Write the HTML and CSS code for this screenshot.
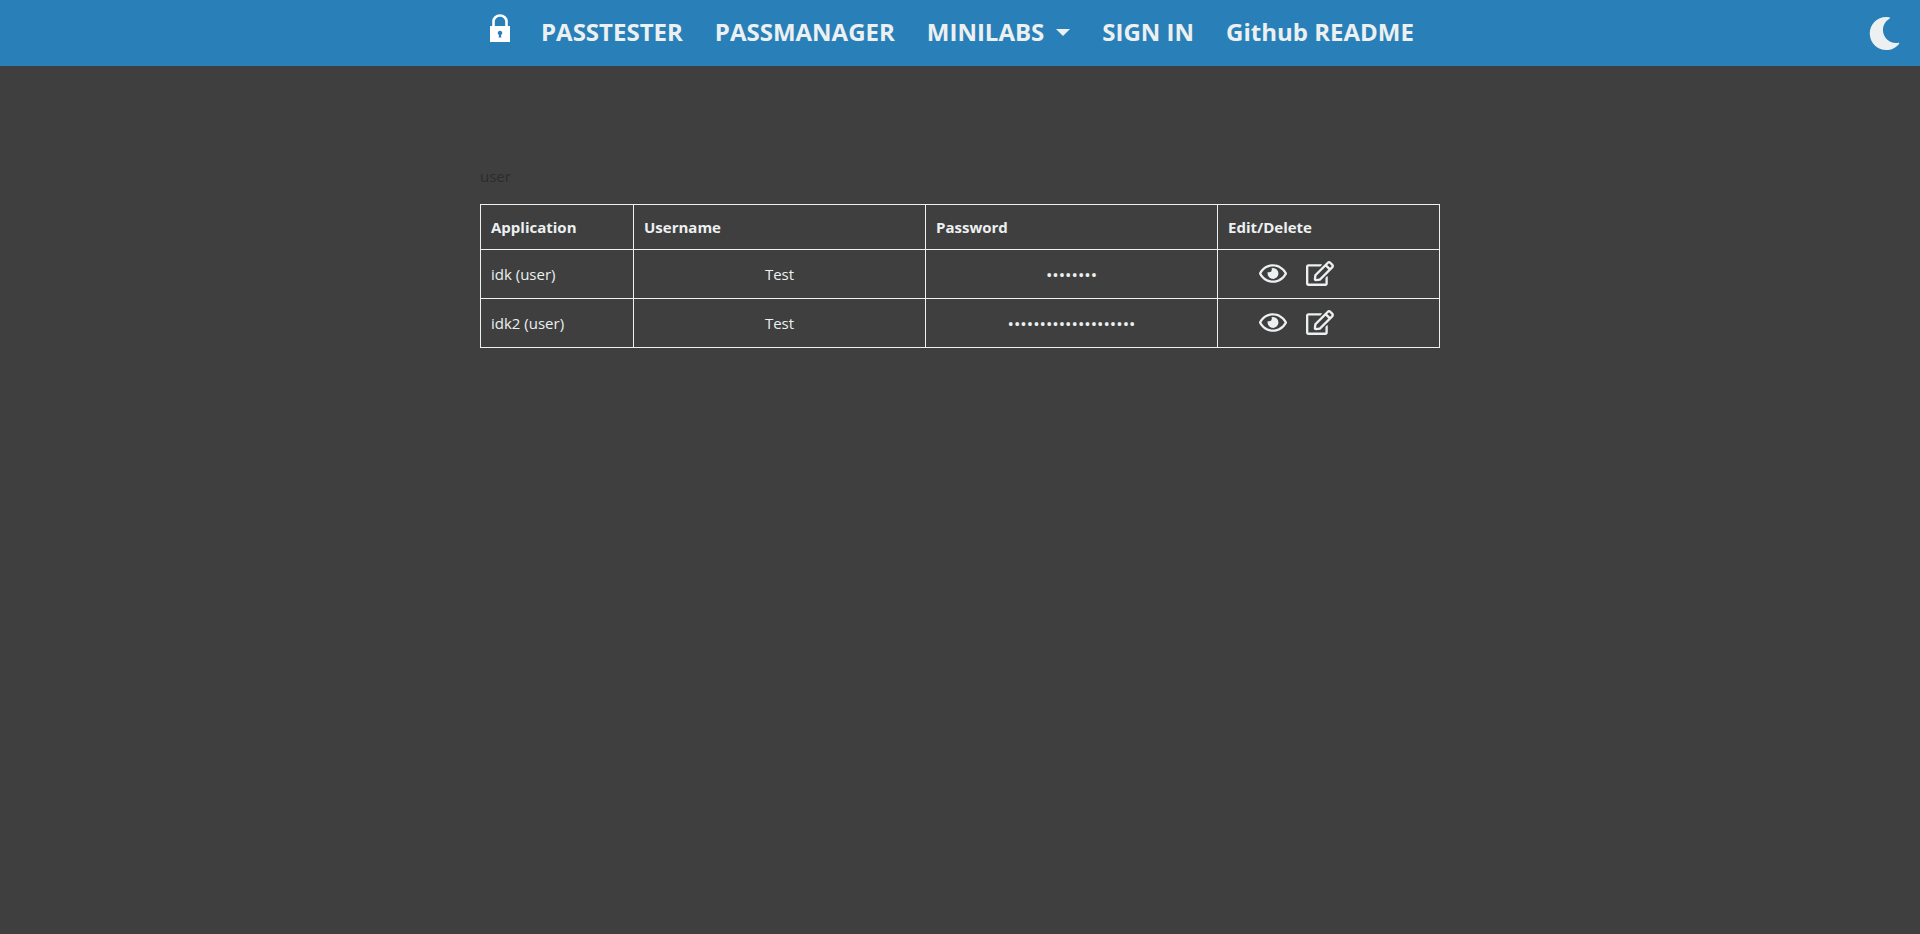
FILE: index.html
```html
<!DOCTYPE html>
<html lang="en">
<head>
    <meta charset="UTF-8">
    <meta name="viewport" content="width=device-width, initial-scale=1.0">
    <title>PassManager</title>
    <link rel="stylesheet" href="styles.css">
</head>
<body>
    <nav class="navbar">
        <div class="nav-inner">
            <a class="nav-logo" href="#">
                <svg class="lock-icon" viewBox="0 0 20 28" fill="#ffffff">
                    <path d="M0 12h20v16H0z M10 16.800a2.200 2.200 0 0 0-1 4.200L8.600 23.500h2.800l-.4-2.500A2.200 2.200 0 0 0 10 16.800z" fill-rule="evenodd"/>
                    <path d="M3.500 13V7.500a6.500 6 0 0 1 13 0V13" fill="none" stroke="#ffffff" stroke-width="2.600"/>
                </svg>
            </a>
            <a class="nav-link" href="#">PASSTESTER</a>
            <a class="nav-link" href="#">PASSMANAGER</a>
            <a class="nav-link dropdown" href="#">MINILABS</a>
            <a class="nav-link" href="#">SIGN IN</a>
            <a class="nav-link" href="#">Github README</a>
        </div>
        <button class="theme-toggle" type="button">
            <svg class="moon-icon" viewBox="0 0 512 512" fill="#ecf0f1">
                <path d="M283.211 512c78.962 0 151.079-35.925 198.857-94.792 7.068-8.708-.639-21.43-11.562-19.35-124.203 23.654-238.262-71.576-238.262-196.954 0-72.222 38.662-138.635 101.498-174.394 9.686-5.512 7.25-20.197-3.756-22.23A258.156 258.156 0 0 0 283.211 0c-141.309 0-256 114.511-256 256 0 141.309 114.511 256 256 256z"/>
            </svg>
        </button>
    </nav>

    <main class="container">
        <p class="current-user">user</p>
        <table class="pass-table">
            <thead>
                <tr>
                    <th class="col-app">Application</th>
                    <th class="col-user">Username</th>
                    <th class="col-pass">Password</th>
                    <th>Edit/Delete</th>
                </tr>
            </thead>
            <tbody>
                <tr>
                    <td>idk (user)</td>
                    <td class="centered">Test</td>
                    <td class="centered dots">••••••••</td>
                    <td>
                        <div class="actions">
                            <svg class="icon" viewBox="0 0 576 512" fill="#ecf0f1"><use href="#eye"/></svg>
                            <svg class="icon" viewBox="0 0 576 512" fill="#ecf0f1"><use href="#edit"/></svg>
                        </div>
                    </td>
                </tr>
                <tr>
                    <td>idk2 (user)</td>
                    <td class="centered">Test</td>
                    <td class="centered dots">••••••••••••••••••••</td>
                    <td>
                        <div class="actions">
                            <svg class="icon" viewBox="0 0 576 512" fill="#ecf0f1"><use href="#eye"/></svg>
                            <svg class="icon" viewBox="0 0 576 512" fill="#ecf0f1"><use href="#edit"/></svg>
                        </div>
                    </td>
                </tr>
            </tbody>
        </table>
    </main>

    <svg class="icon-defs" aria-hidden="true">
        <defs>
            <path id="eye" d="M288 144a110.940 110.940 0 0 0-31.240 5 55.400 55.400 0 0 1 7.240 27 56 56 0 0 1-56 56 55.400 55.400 0 0 1-27-7.240A111.710 111.710 0 1 0 288 144zm284.520 97.400C518.290 135.590 410.930 64 288 64S57.680 135.640 3.480 241.410a32.350 32.350 0 0 0 0 29.190C57.710 376.410 165.070 448 288 448s230.320-71.640 284.520-177.410a32.350 32.350 0 0 0 0-29.190zM288 400c-98.650 0-189.090-55-237.930-144C98.910 167 189.340 112 288 112s189.090 55 237.930 144C477.100 345 386.660 400 288 400z"/>
            <path id="edit" d="M402.300 344.900l32-32c5-5 13.700-1.500 13.700 5.700V464c0 26.500-21.500 48-48 48H48c-26.500 0-48-21.500-48-48V112c0-26.500 21.500-48 48-48h273.500c7.100 0 10.700 8.600 5.700 13.700l-32 32c-1.500 1.500-3.500 2.300-5.700 2.300H48v352h352V350.500c0-2.100.8-4.100 2.300-5.600zm156.600-201.800L296.300 405.700l-90.400 10c-26.200 2.900-48.500-19.200-45.600-45.600l10-90.400L432.900 17.100c22.900-22.900 59.900-22.900 82.700 0l43.200 43.200c22.900 22.900 22.900 60 .1 82.800zM460.100 174L402 115.900 216.200 301.800l-7.300 65.300 65.300-7.300L460.100 174zm64.800-79.700l-43.200-43.200c-4.100-4.100-10.800-4.100-14.800 0L436 82l58.100 58.100 30.900-30.900c4-4.200 4-10.800-.1-14.900z"/>
        </defs>
    </svg>
</body>
</html>
```

FILE: styles.css
```css
* {
    box-sizing: border-box;
}
body {
    font-family: "Open Sans", sans-serif;
    background-color: #3f3f3f;
    color: #ecf0f1;
    margin: 0;
    min-height: 100vh;
}
.navbar {
    background-color: #2980b9;
    height: 66px;
    display: grid;
    grid-template-columns: 1fr 960px 1fr;
    align-items: center;
}
.nav-inner {
    grid-column: 2;
    display: flex;
    align-items: center;
    padding-left: 10px;
    margin-top: -2px;
}
.nav-logo {
    display: flex;
    margin-right: 15px;
    margin-top: -8px;
}
.lock-icon {
    width: 20px;
    height: 28px;
}
.nav-link {
    color: #ecf0f1;
    font-size: 24px;
    font-weight: 700;
    line-height: 32px;
    text-decoration: none;
    padding: 0 16px;
    white-space: nowrap;
}
.dropdown::after {
    content: "";
    display: inline-block;
    margin-left: 12px;
    vertical-align: 5px;
    border-top: 7px solid #ecf0f1;
    border-left: 7px solid transparent;
    border-right: 7px solid transparent;
}
.theme-toggle {
    grid-column: 3;
    justify-self: end;
    display: flex;
    background: none;
    border: none;
    padding: 0;
    margin-right: 19px;
}
.moon-icon {
    width: 33px;
    height: 33px;
}
.container {
    width: 960px;
    margin: 0 auto;
    padding-top: 99px;
}
.current-user {
    margin: 0 0 16px;
    font-size: 15px;
    line-height: 23px;
    color: #2c2c2c;
}
.pass-table {
    width: 960px;
    table-layout: fixed;
    border-collapse: collapse;
    font-size: 15px;
}
.pass-table th,
.pass-table td {
    border: 1px solid #ecf0f1;
    padding: 0 10px;
    text-align: left;
}
.pass-table th {
    height: 45px;
    font-weight: 700;
}
.pass-table td {
    height: 49px;
}
.pass-table .centered {
    text-align: center;
}
.pass-table .dots {
    font-size: 17px;
}
.col-app {
    width: 153px;
}
.col-user,
.col-pass {
    width: 292px;
}
.actions {
    display: flex;
    align-items: center;
    gap: 19px;
    padding-left: 31px;
    padding-bottom: 2px;
}
.icon {
    width: 28px;
    height: 25px;
    display: block;
}
.icon-defs {
    display: none;
}
```
